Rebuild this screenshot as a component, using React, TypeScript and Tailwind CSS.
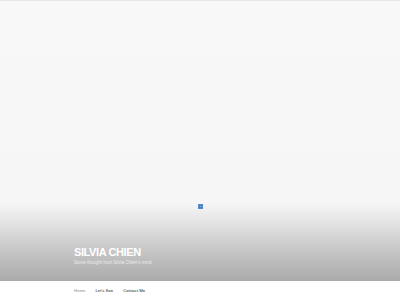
const navItems = [
  { label: "Home", active: true },
  { label: "Let's See", active: false },
  { label: "Contact Me", active: false },
]

// header image + title block, nav strip underneath
const App = () => {
  return (
    <div className="flex h-[300px] w-[400px] flex-col overflow-hidden bg-[#f9f9f9] font-['Liberation_Sans',Arial,sans-serif]">
      <div className="h-px bg-[#e6e6e6]" />

      <div className="flex flex-1 flex-col bg-[linear-gradient(to_bottom,#f8f8f8_0%,#f6f6f6_72%,#e4e4e4_79%,#c9c9c9_88%,#aaaaaa_100%)]">
        <div className="flex h-[208px] items-end justify-center">
          {/* broken image placeholder */}
          <div className="flex h-[5px] w-[5px] items-center justify-center border border-[#5a8ccc] bg-[#3f7bc8]">
            <div className="h-[1px] w-[1px] bg-[#a9c6ea]" />
          </div>
        </div>

        <div className="mt-auto flex flex-col gap-[2px] pb-[15px] pl-[74px]">
          <h1 className="text-[11px] font-bold leading-[12px] tracking-[-0.4px] text-white">SILVIA CHIEN</h1>
          <p className="text-[4.5px] leading-[6px] text-[#ececec]">Some thought from Silvia Chien's mind</p>
        </div>
      </div>

      <nav className="flex h-[19px] items-center gap-[10px] bg-white pl-[74px] pt-px">
        {navItems.map((item) => (
          <span
            key={item.label}
            className={item.active ? "text-[4.3px] text-[#8a8a8a]" : "text-[4.3px] text-[#222]"}
          >
            {item.label}
          </span>
        ))}
      </nav>
    </div>
  )
}

export default App
